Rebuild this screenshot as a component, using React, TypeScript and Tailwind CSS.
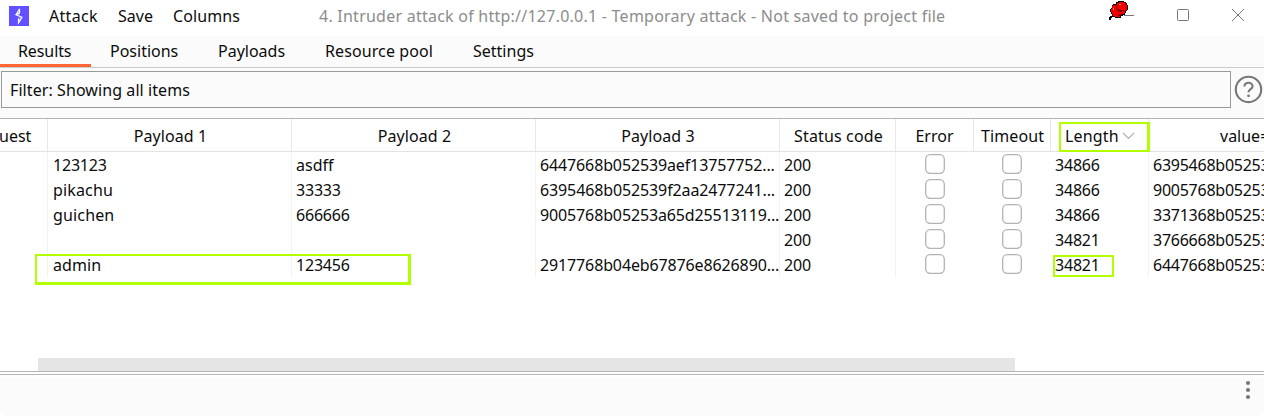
import type { ReactNode } from 'react';

const columns = 'grid grid-cols-[48px_244px_244px_244px_116px_78px_77px_98px_115px]';

type Row = { p1: string; p1Class: string; p2: string; p2Class: string; p3: string; p3Class: string; length: string; value: string };

const rows: Row[] = [
  { p1: '123123', p1Class: 'tracking-[-0.2px]', p2: 'asdff', p2Class: '', p3: '6447668b052539aef13757752...', p3Class: 'tracking-[-0.13px]', length: '34866', value: '6395468b052539' },
  { p1: 'pikachu', p1Class: 'tracking-[0.15px]', p2: '33333', p2Class: 'tracking-[-0.2px]', p3: '6395468b052539f2aa2477241...', p3Class: 'tracking-[-0.12px]', length: '34866', value: '9005768b052539' },
  { p1: 'guichen', p1Class: 'tracking-[0.15px]', p2: '666666', p2Class: 'tracking-[-0.2px]', p3: '9005768b05253a65d25513119...', p3Class: 'tracking-[-0.13px]', length: '34866', value: '3371368b052539' },
  { p1: '', p1Class: '', p2: '', p2Class: '', p3: '', p3Class: '', length: '34821', value: '3766668b052539' },
  { p1: 'admin', p1Class: 'tracking-[0.1px]', p2: '123456', p2Class: 'tracking-[-0.2px]', p3: '2917768b04eb67876e8626890...', p3Class: 'tracking-[-0.13px]', length: '34821', value: '6447668b052539' },
];

function HeaderCell({ children, className = '' }: { children: ReactNode; className?: string }) {
  return (
    <div className={`flex h-8 items-center overflow-hidden border-r border-[#e6e6e6] pt-0.5 whitespace-nowrap ${className}`}>
      {children}
    </div>
  );
}

function Cell({ children, className = 'pl-1' }: { children?: ReactNode; className?: string }) {
  return (
    <div className={`h-[25px] overflow-hidden border-r border-[#f3f3f3] leading-[26px] whitespace-nowrap ${className}`}>
      {children}
    </div>
  );
}

function CheckCell({ className }: { className: string }) {
  return (
    <div className={`flex h-[25px] pt-0.5 ${className}`}>
      <svg width="20" height="20" viewBox="0 0 20 20">
        <rect x="0.700" y="0.700" width="18.600" height="18.600" rx="4.500" fill="#fff" stroke="#b3b3b3" strokeWidth="1.300" />
      </svg>
    </div>
  );
}

function Logo() {
  return (
    <svg width="20" height="20" viewBox="0 0 20 20" className="shrink-0">
      <rect width="20" height="20" fill="#6050ff" />
      <path d="M10.500 3L6.700 9.200H10.500V3ZM9.500 16.800V10.800H13.300L9.500 16.800Z" fill="#fff" fillOpacity="0.250" />
      <path d="M10.500 2.800V7L7 8.700L13 11.200L9.500 16.800V12.500M10.500 3L7 8.700" fill="none" stroke="#fff" strokeWidth="1.200" />
    </svg>
  );
}

function Pin() {
  return (
    <svg width="20" height="20" viewBox="0 0 20 20" shapeRendering="crispEdges">
      <path d="M1 17h1v-1h2v-1h1v-1h2v1H6v1H5v1H4v1H3v2H1z" fill="#000" />
      <path d="M3 8h1V5h1V4h3V2h2V1h6v1h2v1h1v2h1v5h-1v1h-1v2h-1v2h-2v1h-2v2H7v-1H5v-1H4v-2H3v-2H2V9h1z" fill="#000" />
      <path d="M4 6h1V5h4V3h2V2h5v1h2v2h1v5h-1v1h-1v2h-1v1h-2v1h-2v2H7v-1H5v-2H4v-2H3V9h1z" fill="#f00000" />
      <path d="M8 5v4h1v2h2v1h3v-1h2v-1h-5V9H9V5zM11 14h3v1h-1v1h-3v-1h1z" fill="#800000" />
      <path d="M11 4h2v1h-2zM5 8h1v2H5z" fill="#ff8585" />
    </svg>
  );
}

export default function App() {
  return (
    <div className="relative flex h-[416px] w-[1264px] flex-col overflow-hidden bg-white font-['Noto_Sans','Noto_Sans_CJK_SC',sans-serif] text-[16px] text-[#0c0c0c]">
      <header className="flex h-9 shrink-0 items-start pt-1 leading-6 whitespace-nowrap">
        <div className="ml-[9px] pt-0.5"><Logo /></div>
        <span className="ml-5 w-[69px] tracking-[0.3px]">Attack</span>
        <span className="w-[55px]">Save</span>
        <span className="w-[146px] tracking-[0.1px]">Columns</span>
        <span className="w-[790px] tracking-[0.24px] text-[#8c8c8c]">4. Intruder attack of http://127.0.0.1 - Temporary attack - Not saved to project file</span>
        <svg width="155" height="24" viewBox="0 0 155 24" fill="none" stroke="#777" className="shrink-0">
          <path d="M15 11.500h10" />
          <rect x="68.500" y="5.500" width="11" height="11" rx="1" />
          <path d="M123 5l12 12m0-12l-12 12" />
        </svg>
      </header>
      <nav className="flex h-8 shrink-0 border-b border-[#ccc] bg-[#fbfbfb] leading-[30px] whitespace-nowrap">
        <div className="h-[31px] w-[91px] border-b-[3px] border-[#ff6633] pl-[18px] tracking-[-0.1px]">Results</div>
        <div className="w-[127px] pl-[19px]">Positions</div>
        <div className="w-[107px]">Payloads</div>
        <div className="w-[148px] tracking-[0.1px]">Resource pool</div>
        <div>Settings</div>
      </nav>
      <section className="flex h-[50px] shrink-0 bg-[#fbfbfb] pt-[3px] pl-px">
        <div className="h-[37px] w-[1230px] border border-[#999] pl-2 leading-[36px] tracking-[0.08px]">Filter: Showing all items</div>
        <svg width="33" height="37" viewBox="0 0 33 37" fill="none" stroke="#777" strokeWidth="2.100">
          <circle cx="17.500" cy="18.400" r="12.700" />
          <path d="M13.400 15.500c0-5.200 8.200-4.600 8.200-.2 0 3-4.100 2.700-4.100 6" />
          <circle cx="17.500" cy="24.800" r="1.400" fill="#777" stroke="none" />
        </svg>
      </section>
      <main className="flex h-[254px] shrink-0 flex-col overflow-hidden border-y border-[#b5b5b5]">
        <div className={`${columns} h-[33px] border-b border-[#e3e3e3]`}>
          <HeaderCell><span className="-ml-px">uest</span></HeaderCell>
          <HeaderCell className="justify-center pl-0.5 tracking-[0.1px]">Payload 1</HeaderCell>
          <HeaderCell className="justify-center pl-0.5 tracking-[0.1px]">Payload 2</HeaderCell>
          <HeaderCell className="justify-center pl-px tracking-[0.1px]">Payload 3</HeaderCell>
          <HeaderCell className="justify-center pl-0.5 tracking-[0.15px]">Status code</HeaderCell>
          <HeaderCell className="justify-center">Error</HeaderCell>
          <HeaderCell className="justify-center pl-px tracking-[0.1px]">Timeout</HeaderCell>
          <HeaderCell className="pl-[14px]">
            <span className="w-[57px] tracking-[0.15px]">Length</span>
            <svg width="13" height="8" viewBox="0 0 13 8" fill="none" stroke="#b0b0b0" strokeWidth="1.200"><path d="M1 1l5.500 5.500L12 1" /></svg>
          </HeaderCell>
          <HeaderCell className="border-r-0 pl-[71px]">value=</HeaderCell>
        </div>
        <div>
          {rows.map((row) => (
            <div key={row.value} className={columns}>
              <Cell />
              <Cell className={`pl-[5px] ${row.p1Class}`}>{row.p1}</Cell>
              <Cell className={`pl-1 ${row.p2Class}`}>{row.p2}</Cell>
              <Cell className={`pl-1 ${row.p3Class}`}>{row.p3}</Cell>
              <Cell className="pl-1 tracking-[-0.15px]">200</Cell>
              <CheckCell className="pl-[29px]" />
              <CheckCell className="pl-[28px]" />
              <Cell className="pl-1 tracking-[-0.2px]">{row.length}</Cell>
              <Cell className="border-r-0 pl-1 tracking-[-0.25px]">{row.value}</Cell>
            </div>
          ))}
        </div>
        <div className="mt-auto ml-[38px] h-[13px] w-[977px] shrink-0 bg-[#e5e5e5]" />
      </main>
      <div className="h-[6px] shrink-0 border-b-[3px] border-white pt-0.5"><div className="h-px bg-[#b9b3b3]" /></div>
      <footer className="flex flex-1 justify-end rounded-b-lg bg-[#fbfbfb] pr-[13px]">
        <svg width="6" height="24" viewBox="0 0 6 24" fill="#777"><circle cx="3" cy="5" r="2.100" /><circle cx="3" cy="12" r="2.100" /><circle cx="3" cy="19" r="2.100" /></svg>
      </footer>
      <div className="absolute top-0 left-[1108px]"><Pin /></div>
      <div className="absolute top-[254px] left-[35px] h-[31px] w-[376px] border-2 border-b-[3px] border-r-[3px] border-[#b2ff00]" />
      <div className="absolute top-[122px] left-[1059px] h-[30px] w-[91px] border-2 border-r-[3px] border-[#b2ff00]" />
      <div className="absolute top-[255px] left-[1053px] h-[22px] w-[61px] border-2 border-[#b2ff00]" />
    </div>
  );
}
